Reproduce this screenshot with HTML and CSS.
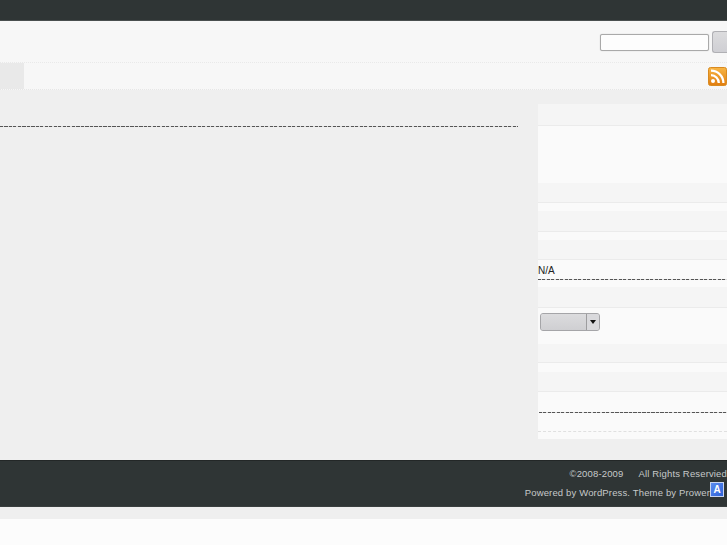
FILE: index.html
```html
<!DOCTYPE html>
<html lang="en">
<head>
<meta charset="utf-8">
<title>Site</title>
<link rel="stylesheet" href="styles.css">
</head>
<body>
<div class="topbar"></div>
<header class="header">
  <form class="search">
    <input class="search-input" type="text" aria-label="Search">
    <button class="search-btn" type="button" aria-label="Go"></button>
  </form>
</header>
<nav class="nav">
  <div class="nav-tab"></div>
  <svg class="rss" width="19" height="19" viewBox="0 0 19 19" aria-label="RSS">
    <defs><linearGradient id="rg" x1="0" y1="0" x2="0" y2="1"><stop offset="0" stop-color="#f8b645"/><stop offset="1" stop-color="#e07d10"/></linearGradient></defs>
    <rect x="0.5" y="0.5" width="18" height="18" rx="2" fill="url(#rg)" stroke="#d98a20"/>
    <circle cx="5" cy="14" r="2" fill="#fff"/>
    <path d="M3 8.2a7.8 7.8 0 0 1 7.8 7.8" fill="none" stroke="#fff" stroke-width="2.3"/>
    <path d="M3 3.6a12.4 12.4 0 0 1 12.4 12.4" fill="none" stroke="#fff" stroke-width="2.3"/>
  </svg>
</nav>
<main class="content">
  <section class="main-col"><div class="dash"></div></section>
  <aside class="sidebar">
    <div class="head h21"></div>
    <div class="body b57"></div>
    <div class="head h19"></div>
    <div class="body b8"></div>
    <div class="head h20"></div>
    <div class="body b8"></div>
    <div class="head h19"></div>
    <div class="body rating">
      <div class="na">N/A</div>
      <div class="dash"></div>
    </div>
    <div class="head h20"></div>
    <div class="body selectbox">
      <div class="select"><span class="select-face"></span><span class="select-arrow"></span></div>
    </div>
    <div class="head h18"></div>
    <div class="body b9"></div>
    <div class="head h19"></div>
    <div class="body last">
      <div class="dash"></div>
      <div class="dash-light"></div>
    </div>
  </aside>
</main>
<footer class="footer">
  <div class="foot-line foot-top"><span>©2008-2009</span><span class="rights">All Rights Reservied</span></div>
  <div class="foot-line foot-bottom"><span>Powered by WordPress. Theme by Prower</span><span class="badge">A</span></div>
</footer>
<div class="strip"></div>
</body>
</html>
```
FILE: styles.css
```css
html, body { margin: 0; padding: 0; }
body {
  background: #fcfcfc;
  font-family: "Liberation Sans", Arial, sans-serif;
  font-size: 10px;
  color: #333;
  overflow: hidden;
  height: 545px;
}
.topbar { height: 20px; background: #2f3535; border-bottom: 1px solid #4a4f4f; }
.header {
  height: 41px;
  background: #f7f7f7;
  border-bottom: 1px dotted #e9e9e9;
  display: flex;
  justify-content: flex-end;
  align-items: center;
}
.search { display: flex; align-items: center; gap: 3px; margin-top: 1px; }
.search-input {
  box-sizing: border-box;
  width: 109px;
  height: 17px;
  margin: 1px 0 0;
  padding: 0;
  background: #fdfdfd;
  border: 1px solid #a9a9a9;
  box-shadow: 0 0 1px #b8b8b8;
  border-radius: 2px;
  outline: 0;
}
.search-btn {
  box-sizing: border-box;
  width: 15px;
  height: 22px;
  margin: 0;
  padding: 0;
  border: 1px solid #b0b0b4;
  border-right: 0;
  border-radius: 3px 0 0 3px;
  background: linear-gradient(#dcdcde, #cfcfd4);
}
.nav {
  height: 26px;
  background: #f7f7f7;
  border-bottom: 1px dotted #e6e6e6;
  display: flex;
  justify-content: space-between;
  align-items: flex-start;
}
.nav-tab { width: 24px; height: 26px; background: #e9e9e9; }
.rss { margin: 4px 0 0; display: block; }
.content {
  height: 370px;
  background: #efefef;
  display: flex;
  justify-content: space-between;
  box-sizing: border-box;
}
.main-col { width: 518px; padding-top: 36px; }
.dash {
  height: 1px;
  background: repeating-linear-gradient(90deg, #555 0 3px, #dcdcdc 3px 4.5px);
}
.sidebar { width: 189px; padding-top: 14px; }
.head { background: #f5f5f5; border-bottom: 1px solid #ebebeb; box-sizing: border-box; }
.h21 { height: 22px; }
.h20 { height: 21px; }
.h19 { height: 20px; }
.h18 { height: 19px; }
.body { background: #fafafa; }
.b57 { height: 57px; }
.b8 { height: 8px; }
.b9 { height: 9px; }
.rating { height: 27px; box-sizing: border-box; padding-top: 4px; }
.na { color: #222; line-height: 13px; height: 15px; }
.selectbox { height: 36px; box-sizing: border-box; padding: 5px 0 0 2px; }
.select {
  display: flex;
  box-sizing: border-box;
  width: 60px;
  height: 18px;
  border: 1px solid #a5a5a8;
  border-radius: 3px;
  background: #d8d8da;
  overflow: hidden;
}
.select-face { flex: 1; background: linear-gradient(#dcdcde, #cfcfd2); }
.select-arrow {
  width: 12px;
  border-left: 1px solid #9d9d9f;
  background: #d9d9dc;
  position: relative;
}
.select-arrow::after {
  content: "";
  position: absolute;
  left: 3px;
  top: 6px;
  border: 3px solid transparent;
  border-top: 4px solid #111;
  border-bottom: 0;
}
.last { height: 47px; box-sizing: border-box; padding: 20px 0 0 1px; }
.dash-light { border-top: 1px dashed #e0e0e0; margin-top: 18px; margin-left: -1px; }
.footer {
  height: 47px;
  box-sizing: border-box;
  background: #2f3535;
  border-top: 1px solid #232727;
  border-bottom: 1px solid #3a3f3f;
  color: #c6c9c9;
  font-size: 9.5px;
  letter-spacing: 0.15px;
  overflow: hidden;
}
.foot-line { display: flex; justify-content: flex-end; white-space: nowrap; }
.foot-top { height: 13px; line-height: 13px; margin-top: 6px; }
.rights { margin-left: 15px; }
.foot-bottom { margin-top: 0; padding-right: 3px; align-items: flex-start; height: 26px; }
.foot-bottom > span:first-child { margin-top: 6px; line-height: 13px; }
.badge {
  display: block;
  box-sizing: border-box;
  width: 14px;
  height: 15px;
  background: linear-gradient(135deg, #5b8cf0, #2f62d8);
  border: 1px solid #c8d4f0;
  color: #fff;
  font-weight: bold;
  font-size: 10px;
  line-height: 13px;
  text-align: center;
  letter-spacing: 0;
  margin-top: 2px;
}
.strip { height: 12px; background: #efefef; }
```
